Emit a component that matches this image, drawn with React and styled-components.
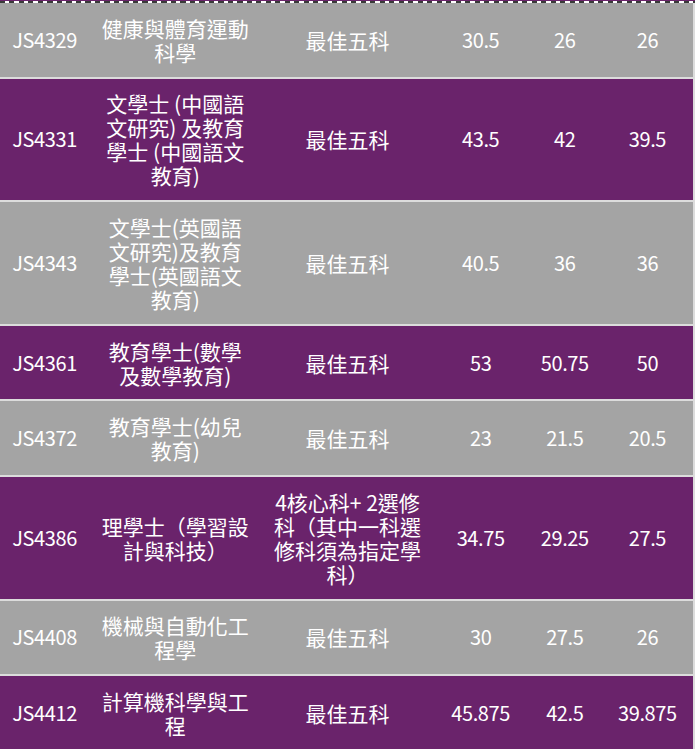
import React from "react";
import styled, { createGlobalStyle } from "styled-components";

const Global = createGlobalStyle`
  html, body { margin: 0; padding: 0; background: #ffffff; }
  body { font-family: "Noto Sans CJK TC", "Noto Sans", sans-serif; }
`;

const Wrap = styled.div`
  width: 695px;
  overflow: hidden;
`;

const TopEdge = styled.div`
  height: 1px;
  background: #6a236b;
`;

const Dashes = styled.div`
  height: 2px;
  background: repeating-linear-gradient(
    90deg,
    #3a3a3a 0px,
    #3a3a3a 5px,
    #ffffff 5px,
    #ffffff 9.5px
  );
`;

const Table = styled.table`
  width: 695px;
  border-collapse: collapse;
  table-layout: fixed;
  border-right: 2px solid #dcdcdc;
`;

const Row = styled.tr`
  background: ${(p) => (p.$purple ? "#6a236b" : "#a4a4a4")};
  border-bottom: 2px solid #dcdcdc;
`;

const Cell = styled.td`
  color: #ffffff;
  font-size: ${(p) => (p.$num ? "20px" : "21px")};
  letter-spacing: ${(p) => (p.$num ? "-0.4px" : "0")};
  line-height: 24px;
  text-align: center;
  vertical-align: middle;
  padding: 12.8px 10px;
  word-break: normal;
`;

const rows = [
  ["JS4329", "健康與體育運動科學", "最佳五科", "30.5", "26", "26"],
  ["JS4331", "文學士 (中國語文研究) 及教育學士 (中國語文教育)", "最佳五科", "43.5", "42", "39.5"],
  ["JS4343", "文學士(英國語文研究)及教育學士(英國語文教育)", "最佳五科", "40.5", "36", "36"],
  ["JS4361", "教育學士(數學及數學教育)", "最佳五科", "53", "50.75", "50"],
  ["JS4372", "教育學士(幼兒教育)", "最佳五科", "23", "21.5", "20.5"],
  ["JS4386", "理學士（學習設計與科技）", "4核心科+ 2選修科（其中一科選修科須為指定學科）", "34.75", "29.25", "27.5"],
  ["JS4408", "機械與自動化工程學", "最佳五科", "30", "27.5", "26"],
  ["JS4412", "計算機科學與工程", "最佳五科", "45.875", "42.5", "39.875"],
];

const widths = [89, 172, 172, 94, 74, 92];
const numeric = [true, false, false, true, true, true];

export default function App() {
  return (
    <Wrap>
      <Global />
      <TopEdge />
      <Dashes />
      <Table>
        <colgroup>
          {widths.map((w, i) => (
            <col key={i} style={{ width: w }} />
          ))}
        </colgroup>
        <tbody>
          {rows.map((r, i) => (
            <Row key={r[0]} $purple={i % 2 === 1}>
              {r.map((c, j) => (
                <Cell key={j} $num={numeric[j]}>
                  {c}
                </Cell>
              ))}
            </Row>
          ))}
        </tbody>
      </Table>
    </Wrap>
  );
}
